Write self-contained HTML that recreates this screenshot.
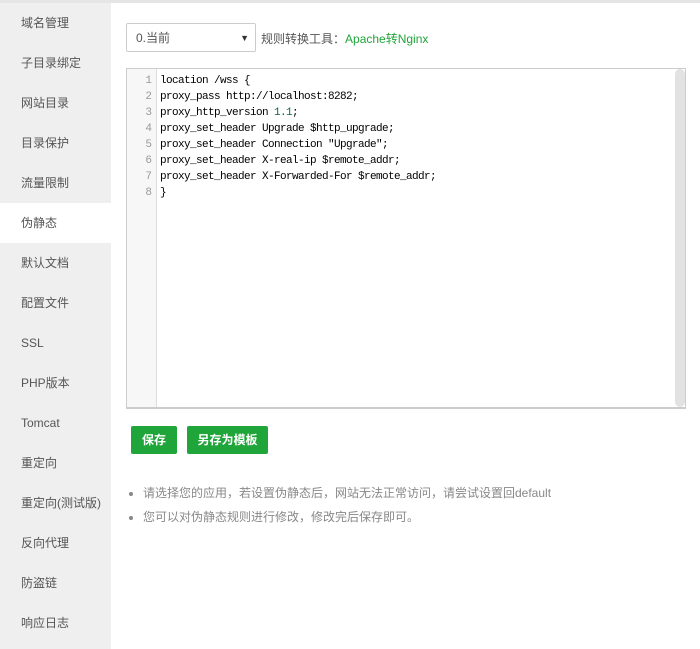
<!DOCTYPE html>
<html><head><meta charset="utf-8"><style>
body{margin:0;width:700px;height:649px;background:#fff;font-family:"Liberation Sans","Noto Sans CJK SC",sans-serif;position:relative;overflow:hidden;font-size:12px;color:#555}
.side{position:absolute;left:0;top:3px;width:111px;height:646px;background:#efefef}
.top{position:absolute;left:0;top:0;width:700px;height:3px;background:#e5e5e5}
.side div{height:40px;line-height:40px;padding-left:21px;color:#555;font-size:12px}
.side div.on{background:#fff}
.sel{position:absolute;left:126px;top:23px;border:1px solid #ccc;border-radius:2px;line-height:28px;padding-left:9px;box-sizing:border-box;width:130px;height:29px;color:#555}
.sel:after{content:"▼";position:absolute;right:6px;top:0;font-size:9px;color:#333}
.tool{position:absolute;left:261px;top:31px;line-height:16px;color:#555}
.tool b{font-weight:normal;color:#20a53a}
.ed{position:absolute;left:126px;top:68px;border:1px solid #ccc;box-sizing:border-box;width:560px;height:341px;border-bottom:2px solid #ccc}
.gut{position:absolute;left:0;top:0;width:30px;height:100%;background:#f7f7f7;border-right:1px solid #ddd;padding-top:4px;box-sizing:border-box}
.gut div{height:16px;line-height:16px;text-align:right;padding-right:4px;color:#999;font-family:"Liberation Mono","DejaVu Sans Mono",monospace;font-size:11px}
.code{position:absolute;left:33px;top:4px;font-family:"Liberation Mono","DejaVu Sans Mono",monospace;font-size:11px;color:#000;letter-spacing:-0.6px}
.code div{height:16px;line-height:16px;white-space:pre}
.sb{position:absolute;right:0;top:0;width:10px;height:338px;background:#e2e2e2;border-radius:5px}
.btn{position:absolute;top:426px;height:28px;line-height:28px;background:#20a53a;color:#fff;border-radius:2px;text-align:center;font-size:12px;font-weight:bold}
ul{position:absolute;left:125px;top:483px;margin:0;padding:0 0 0 18px;color:#888;font-size:12px}
ul li{height:24px;line-height:20px}
</style></head><body>
<div class="top"></div>
<div class="side">
<div>域名管理</div><div>子目录绑定</div><div>网站目录</div><div>目录保护</div><div>流量限制</div><div class="on">伪静态</div><div>默认文档</div><div>配置文件</div><div>SSL</div><div>PHP版本</div><div>Tomcat</div><div>重定向</div><div>重定向(测试版)</div><div>反向代理</div><div>防盗链</div><div>响应日志</div>
</div>
<div class="sel">0.当前</div>
<div class="tool">规则转换工具：<b>Apache转Nginx</b></div>
<div class="ed">
<div class="gut"><div>1</div><div>2</div><div>3</div><div>4</div><div>5</div><div>6</div><div>7</div><div>8</div></div>
<div class="code"><div>location /wss {</div><div>proxy_pass http://localhost:8282;</div><div>proxy_http_version <span style="color:#164">1.1</span>;</div><div>proxy_set_header Upgrade $http_upgrade;</div><div>proxy_set_header Connection "Upgrade";</div><div>proxy_set_header X-real-ip $remote_addr;</div><div>proxy_set_header X-Forwarded-For $remote_addr;</div><div>}</div></div>
<div class="sb"></div>
</div>
<div class="btn" style="left:131px;width:46px">保存</div>
<div class="btn" style="left:187px;width:81px">另存为模板</div>
<ul><li>请选择您的应用，若设置伪静态后，网站无法正常访问，请尝试设置回default</li><li>您可以对伪静态规则进行修改，修改完后保存即可。</li></ul>
</body></html>
